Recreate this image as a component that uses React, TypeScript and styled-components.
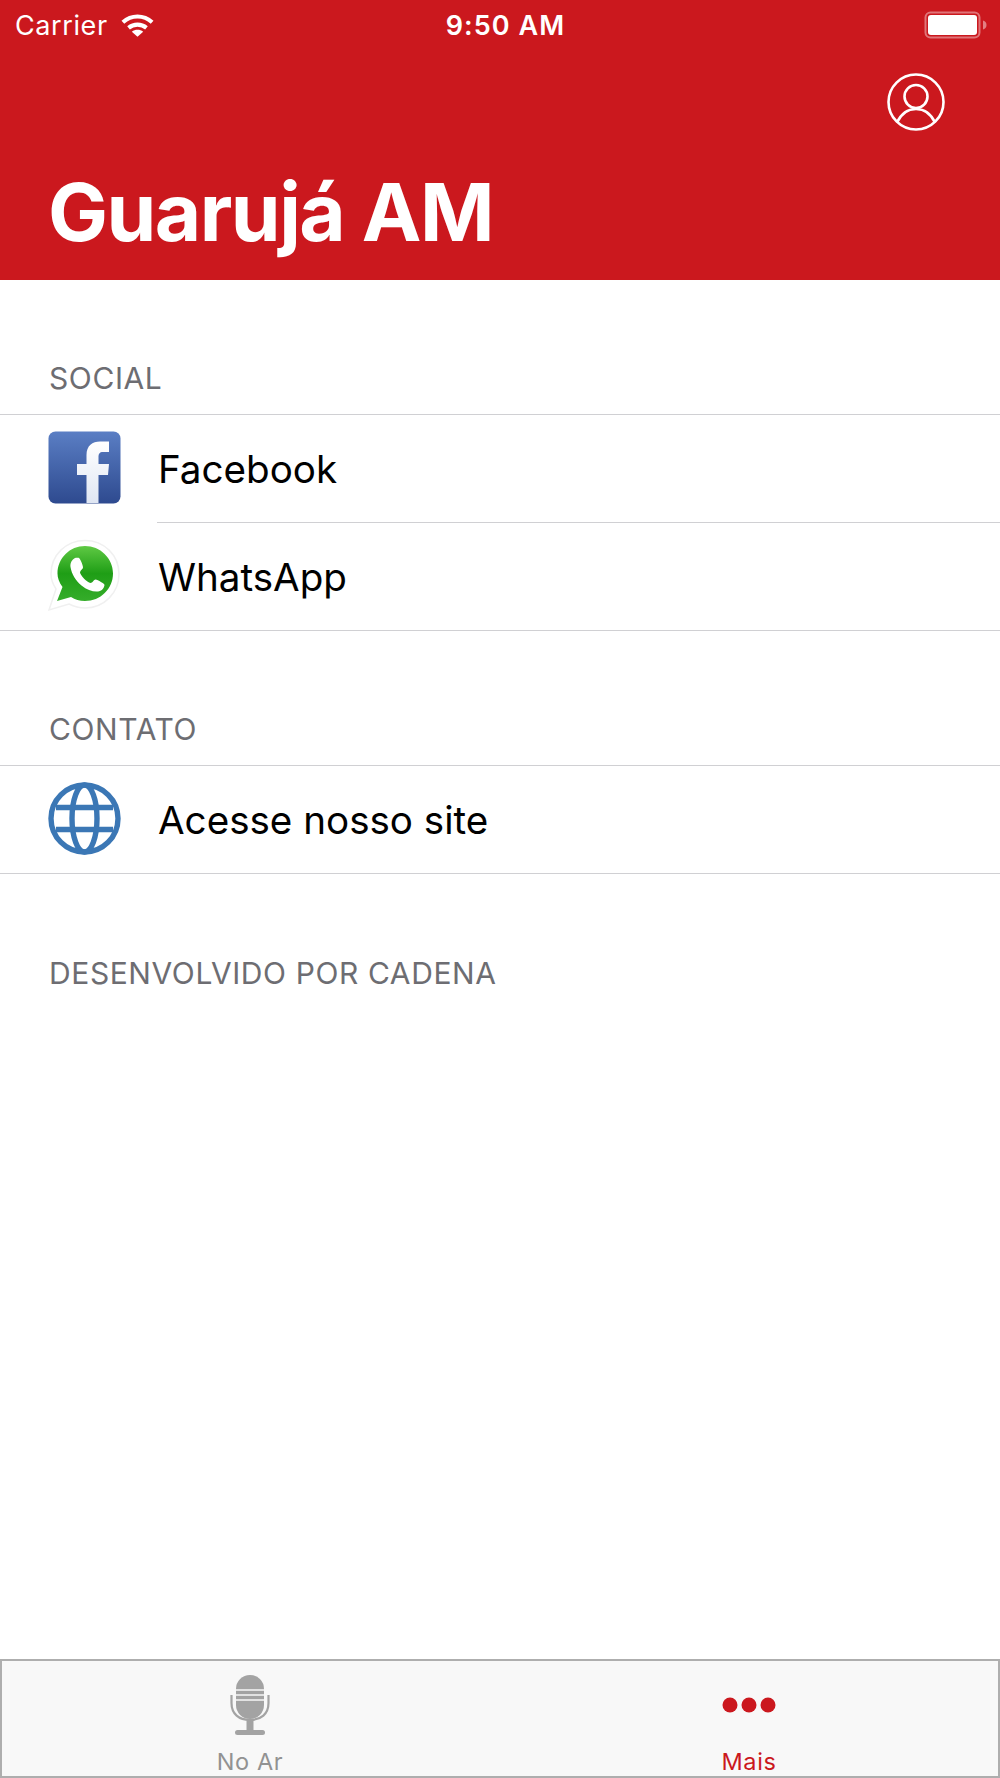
import React from 'react';
import styled, { createGlobalStyle } from 'styled-components';

const GlobalStyle = createGlobalStyle`
  html, body {
    margin: 0;
    padding: 0;
    background: #fff;
  }
  body {
    font-family: Inter, "Liberation Sans", sans-serif;
  }
`;

const Screen = styled.div`
  width: 1000px;
  height: 1778px;
  display: flex;
  flex-direction: column;
  background: #fff;
  overflow: hidden;
`;

const Header = styled.header`
  height: 280px;
  flex: none;
  background: #cb181e;
  color: #fff;
  display: flex;
  flex-direction: column;
`;

const StatusBar = styled.div`
  height: 50px;
  display: grid;
  grid-template-columns: 1fr auto 1fr;
  align-items: center;
  padding: 0 12px 0 15px;
`;

const StatusLeft = styled.div`
  display: flex;
  align-items: center;
  gap: 13px;
  font-size: 27px;
  letter-spacing: 0.6px;
`;

const StatusTime = styled.div`
  margin-left: 8px;
  font-size: 27px;
  font-weight: 600;
  letter-spacing: 1.1px;
`;

const Battery = styled.div`
  justify-self: end;
  display: flex;
`;

const ProfileRow = styled.div`
  display: flex;
  justify-content: flex-end;
  padding: 23px 55px 0 0;
`;

const Title = styled.h1`
  margin: 0;
  padding: 36px 0 0 48px;
  font-size: 80px;
  line-height: 90px;
  font-weight: 700;
  letter-spacing: -1.5px;
`;

const Content = styled.main`
  flex: 1;
  display: flex;
  flex-direction: column;
`;

const SectionLabel = styled.div<{ $top: number }>`
  margin-top: ${p => p.$top}px;
  padding: 0 0 18px 49px;
  font-size: 30px;
  line-height: 36px;
  letter-spacing: 0.6px;
  color: #6d6d72;
`;

const List = styled.div`
  border-top: 1px solid #d0d0d3;
  border-bottom: 1px solid #d0d0d3;
`;

const Row = styled.div`
  height: 107px;
  display: flex;
  align-items: center;
  padding-left: 48px;
  font-size: 38.6px;
  color: #000;

  & + & {
    position: relative;
    margin-top: 1px;
  }
  & + &::before {
    content: '';
    position: absolute;
    top: -1px;
    left: 157px;
    right: 0;
    height: 1px;
    background: #d0d0d3;
  }
`;

const RowIcon = styled.div`
  width: 73px;
  height: 73px;
  margin: 0 37px 2px 0;
  flex: none;
  display: flex;
`;

const TabBar = styled.nav`
  height: 119px;
  flex: none;
  box-sizing: border-box;
  display: grid;
  grid-template-columns: 1fr 1fr;
  background: #f8f8f8;
  border: 2px solid #aeaeae;
`;

const Tab = styled.div<{ $active?: boolean }>`
  display: flex;
  flex-direction: column;
  align-items: center;
  padding-right: ${p => (p.$active ? 0 : 2)}px;
  color: ${p => (p.$active ? '#cb181e' : '#929292')};
  font-size: 23.5px;
  line-height: 28px;
  letter-spacing: 0.6px;
`;

const TabIcon = styled.div`
  flex: 1;
  display: flex;
  align-items: center;
  justify-content: center;
`;

const Wifi = () => (
  <svg width="33" height="25" viewBox="0 0 35 26" fill="none" stroke="#fff" strokeWidth="4.4">
    <path d="M2 9.5C11 1.5 24 1.5 33 9.5" />
    <path d="M8 15.5C13.5 11 21.5 11 27 15.5" />
    <path d="M17.5 25L11.5 19.5C15 17 20 17 23.5 19.5Z" fill="#fff" stroke="none" />
  </svg>
);

const BatteryIcon = () => (
  <svg width="64" height="28" viewBox="0 0 64 28">
    <rect x="1.5" y="1.5" width="54" height="25" rx="5" fill="none" stroke="#fff" strokeOpacity="0.4" strokeWidth="2" />
    <rect x="4" y="4" width="49" height="20" rx="3" fill="#fff" />
    <path d="M59 9.5C61.5 10 62.5 12 62.5 14S61.5 18 59 18.5Z" fill="#fff" fillOpacity="0.45" />
  </svg>
);

const ProfileIcon = () => (
  <svg width="58" height="58" viewBox="0 0 58 58" fill="none" stroke="#fff" strokeWidth="2.6">
    <circle cx="29" cy="29" r="27.5" />
    <circle cx="29" cy="23.5" r="11.5" />
    <path d="M10 49.5C14 41 21 36 29 36S44 41 48 49.5" />
  </svg>
);

const FacebookIcon = () => (
  <svg width="73" height="73" viewBox="0 0 73 73">
    <defs>
      <linearGradient id="fbBg" x1="0" y1="0" x2="0" y2="1">
        <stop offset="0" stopColor="#5a7ec4" />
        <stop offset="1" stopColor="#2e4a8f" />
      </linearGradient>
      <linearGradient id="fbF" x1="0" y1="0" x2="0" y2="1">
        <stop offset="0" stopColor="#ffffff" />
        <stop offset="1" stopColor="#dfe6f3" />
      </linearGradient>
    </defs>
    <rect x="0.5" y="0.5" width="72" height="72" rx="7" fill="url(#fbBg)" />
    <path
      d="M38.5 72V44H29V33H38.5V24C38.5 14.5 44.5 10.5 52 10.5H61V21H55C51.5 21 50.5 23 50.5 26V33H61L60 44H50.5V72Z"
      fill="url(#fbF)"
    />
  </svg>
);

const WhatsAppIcon = () => (
  <svg width="73" height="73" viewBox="0 0 73 73">
    <defs>
      <linearGradient id="waBg" x1="0" y1="0" x2="0" y2="1">
        <stop offset="0" stopColor="#5fc944" />
        <stop offset="0.5" stopColor="#1f9e16" />
        <stop offset="1" stopColor="#35ad2a" />
      </linearGradient>
    </defs>
    <path
      d="M1 71L8 50C4.5 44.5 3 40 3 35C3 16 18 1.5 37 1.5S71 16 71 35S56 69 37 69C31 69 26 67.5 21 65Z"
      fill="#fff"
      stroke="#f0f0f0"
      strokeWidth="1.5"
    />
    <path
      d="M9 62L14.5 48C11 43 9.5 39 9.5 34.5C9.5 19 22 7 37 7S65 19 65 34.5S52.5 62 37 62C31.5 62 27 60.5 23 58Z"
      fill="url(#waBg)"
    />
    <path
      d="M27 19C24 20.5 22 24 22.5 28C23.5 35 28 42 33.5 46.5C39 51 45 53 50 52.5C53.5 52 56 49.5 56.5 46C56.5 44.5 50 41 47.5 40.5C46 40.5 44.5 44 42.5 44C39 43.5 32.5 36.5 32 33.5C32 31.5 35 30 35 28.5C35 26 32 19 30.5 18.8C29.5 18.6 28 18.6 27 19Z"
      fill="#fff"
    />
  </svg>
);

const GlobeIcon = () => (
  <svg width="73" height="73" viewBox="0 0 73 73" fill="none" stroke="#3b77b5" strokeWidth="5.4">
    <circle cx="36.5" cy="36.5" r="33.5" />
    <ellipse cx="36.5" cy="36.5" rx="12.5" ry="33.5" />
    <path d="M8 25.5H65" />
    <path d="M8 47.5H65" />
  </svg>
);

const MicIcon = () => (
  <svg width="40" height="60" viewBox="0 0 40 60">
    <rect x="6" y="0" width="28" height="44" rx="14" fill="#a3a3a3" />
    <path d="M6 15H34M6 20H34M6 25H34" stroke="#f8f8f8" strokeWidth="1.5" />
    <path d="M1.5 20V28C1.5 39 9 45 20 45S38.5 39 38.5 28V20" fill="none" stroke="#a3a3a3" strokeWidth="2.2" />
    <rect x="16.5" y="45" width="7" height="10" fill="#a3a3a3" />
    <rect x="5" y="55" width="30" height="5" rx="2.5" fill="#a3a3a3" />
  </svg>
);

const DotsIcon = () => (
  <svg width="54" height="16" viewBox="0 0 54 16" fill="#cb181e">
    <circle cx="8" cy="8" r="7.5" />
    <circle cx="27" cy="8" r="7.5" />
    <circle cx="46" cy="8" r="7.5" />
  </svg>
);

const App: React.FC = () => {
  return (
    <Screen>
      <GlobalStyle />
      <Header>
        <StatusBar>
          <StatusLeft>
            Carrier
            <Wifi />
          </StatusLeft>
          <StatusTime>9:50 AM</StatusTime>
          <Battery>
            <BatteryIcon />
          </Battery>
        </StatusBar>
        <ProfileRow>
          <ProfileIcon />
        </ProfileRow>
        <Title>Guarujá AM</Title>
      </Header>

      <Content>
        <SectionLabel $top={80}>SOCIAL</SectionLabel>
        <List>
          <Row>
            <RowIcon><FacebookIcon /></RowIcon>
            Facebook
          </Row>
          <Row>
            <RowIcon><WhatsAppIcon /></RowIcon>
            WhatsApp
          </Row>
        </List>
        <SectionLabel $top={80}>CONTATO</SectionLabel>
        <List>
          <Row>
            <RowIcon><GlobeIcon /></RowIcon>
            Acesse nosso site
          </Row>
        </List>
        <SectionLabel $top={81}>DESENVOLVIDO POR CADENA</SectionLabel>
      </Content>

      <TabBar>
        <Tab>
          <TabIcon><MicIcon /></TabIcon>
          No Ar
        </Tab>
        <Tab $active>
          <TabIcon><DotsIcon /></TabIcon>
          Mais
        </Tab>
      </TabBar>
    </Screen>
  );
};

export default App;
